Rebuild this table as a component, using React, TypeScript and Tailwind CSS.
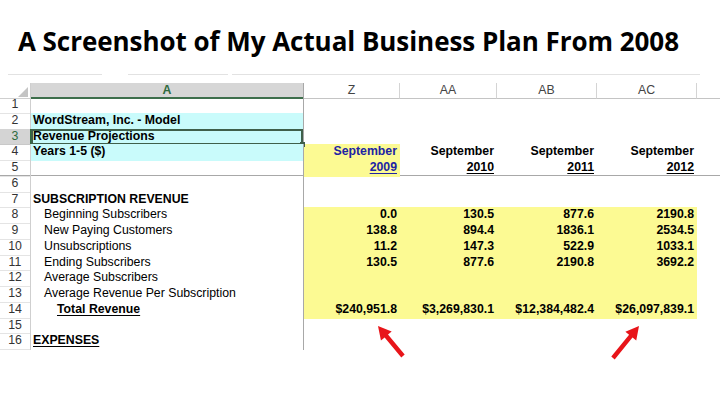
import React from 'react'

type Cell = {
  text?: string
  bold?: boolean
  underline?: boolean
  blue?: boolean
  bg?: string
}

type Row = {
  n: number
  label?: boolean
  a?: string
  aIndent?: 'none' | 'sub' | 'total'
  aBold?: boolean
  aUnderline?: boolean
  cyan?: boolean
  selected?: boolean
  cells?: Cell[]
  yellowAll?: boolean
  bottomLine?: boolean
}

const YELLOW = 'bg-[#fcfa93]'

const ROWS: Row[] = [
  { n: 1 },
  { n: 2, a: 'WordStream, Inc. - Model', aBold: true, cyan: true },
  { n: 3, a: 'Revenue Projections', aBold: true, cyan: true, selected: true },
  {
    n: 4, a: 'Years 1-5 ($)', aBold: true, cyan: true,
    cells: [
      { text: 'September', bold: true, blue: true, bg: YELLOW },
      { text: 'September', bold: true },
      { text: 'September', bold: true },
      { text: 'September', bold: true }
    ]
  },
  {
    n: 5, bottomLine: true,
    cells: [
      { text: '2009', bold: true, blue: true, underline: true, bg: YELLOW },
      { text: '2010', bold: true, underline: true },
      { text: '2011', bold: true, underline: true },
      { text: '2012', bold: true, underline: true }
    ]
  },
  { n: 6 },
  { n: 7, a: 'SUBSCRIPTION REVENUE', aBold: true },
  { n: 8, a: 'Beginning Subscribers', aIndent: 'sub', yellowAll: true, cells: [{ text: '0.0' }, { text: '130.5' }, { text: '877.6' }, { text: '2190.8' }] },
  { n: 9, a: 'New Paying Customers', aIndent: 'sub', yellowAll: true, cells: [{ text: '138.8' }, { text: '894.4' }, { text: '1836.1' }, { text: '2534.5' }] },
  { n: 10, a: 'Unsubscriptions', aIndent: 'sub', yellowAll: true, cells: [{ text: '11.2' }, { text: '147.3' }, { text: '522.9' }, { text: '1033.1' }] },
  { n: 11, a: 'Ending Subscribers', aIndent: 'sub', yellowAll: true, cells: [{ text: '130.5' }, { text: '877.6' }, { text: '2190.8' }, { text: '3692.2' }] },
  { n: 12, a: 'Average Subscribers', aIndent: 'sub', yellowAll: true },
  { n: 13, a: 'Average Revenue Per Subscription', aIndent: 'sub', yellowAll: true },
  {
    n: 14, a: 'Total Revenue', aIndent: 'total', aBold: true, aUnderline: true, yellowAll: true,
    cells: [{ text: '$240,951.8' }, { text: '$3,269,830.1' }, { text: '$12,384,482.4' }, { text: '$26,097,839.1' }]
  },
  { n: 15 },
  { n: 16, a: 'EXPENSES', aBold: true, aUnderline: true }
]

const GRID = 'grid grid-cols-[31px_273px_96px_97px_100px_100px_1fr]'

// polygon for a filled arrow from tail to tip
function arrowPoints(tip: [number, number], tail: [number, number]) {
  const dx = tip[0] - tail[0]
  const dy = tip[1] - tail[1]
  const len = Math.hypot(dx, dy)
  const ux = dx / len
  const uy = dy / len
  const nx = -uy
  const ny = ux
  const head = 13
  const hw = 7
  const sw = 2.2
  const bx = tip[0] - ux * head
  const by = tip[1] - uy * head
  const pts = [
    [tail[0] + nx * sw, tail[1] + ny * sw],
    [bx + nx * sw, by + ny * sw],
    [bx + nx * hw, by + ny * hw],
    [tip[0], tip[1]],
    [bx - nx * hw, by - ny * hw],
    [bx - nx * sw, by - ny * sw],
    [tail[0] - nx * sw, tail[1] - ny * sw]
  ]
  return pts.map(p => p.join(',')).join(' ')
}

function SheetRow({ row }: { row: Row }) {
  const indent = row.aIndent === 'sub' ? 'pl-[13px]' : row.aIndent === 'total' ? 'pl-[26px]' : 'pl-[2px]'
  const cells = row.cells ?? []
  return (
    <div className={`${GRID} h-[15.77px] leading-[15.77px] ${row.bottomLine ? 'border-b border-[#a8a8a8]' : ''}`}>
      <div className={`text-center border-r border-b text-[12.3px] ${row.selected ? 'bg-[#d4d4d4] text-[#2e6b3e] border-r-[#2e6b3e] border-b-[#c8c8c8]' : 'text-[#333] border-r-[#cfcfcf] border-b-[#e4e4e4]'}`}>
        {row.n}
      </div>
      <div className={`relative border-r border-[#a8a8a8] text-[12.3px] text-black whitespace-nowrap ${row.cyan ? 'bg-[#c9fbfb]' : ''} ${indent}`}>
        {row.selected && (
          <div className="absolute inset-0 border-2 border-[#3f5f4a] pointer-events-none">
            <div className="absolute right-[-4px] bottom-[-4px] w-[5px] h-[5px] bg-[#3f5f4a]" />
          </div>
        )}
        <span className={`${row.aBold ? 'font-bold' : ''} ${row.aUnderline ? 'underline underline-offset-2' : ''}`}>{row.a}</span>
      </div>
      {[0, 1, 2, 3].map(i => {
        const c = cells[i]
        const bg = c?.bg ?? (row.yellowAll ? YELLOW : '')
        return (
          <div key={i} className={`text-right pr-[3px] text-[12.3px] whitespace-nowrap ${bg}`}>
            {c?.text && (
              <span className={`font-bold ${c.blue ? 'text-[#2023a4]' : 'text-black'} ${c.underline ? 'underline underline-offset-2' : ''}`}>
                {c.text}
              </span>
            )}
          </div>
        )
      })}
      <div />
    </div>
  )
}

export default function App() {
  return (
    <div className="relative w-[720px] h-[405px] overflow-hidden bg-white font-['Liberation_Sans',Arial,sans-serif]">
      <div className="pl-[18px] pt-[22px] h-[74px]">
        <h1 className="font-['Open_Sans',sans-serif] font-bold text-[26px] leading-[38px] text-black tracking-[-0.05px] whitespace-nowrap">
          A Screenshot of My Actual Business Plan From 2008
        </h1>
      </div>

      <div className="flex h-[9px]">
        <div className="ml-[8px] w-[94px] h-px bg-[#e2e2e2]" />
        <div className="ml-[26px] w-[100px] h-px bg-[#e2e2e2]" />
        <div className="ml-[4px] w-[468px] h-px bg-[#e2e2e2]" />
      </div>

      {/* sheet */}
      <div className="h-[267px] overflow-hidden">
        <div className={`${GRID} h-[14px] leading-[14px] text-[12.3px]`}>
          <div className="relative border-r border-b border-[#cfcfcf]">
            <svg width="10" height="10" className="absolute right-[2px] bottom-[1px]">
              <polygon points="10,0 10,10 0,10" fill="#c4c4c4" />
            </svg>
          </div>
          <div className="bg-[#d6d6d6] border-b-2 border-[#3d6e4b] text-center font-bold text-[#2f6b3e] border-r border-r-[#a8a8a8]">A</div>
          {['Z', 'AA', 'AB', 'AC'].map(h => (
            <div key={h} className="text-center text-[#444] border-r border-b border-[#d4d4d4] border-b-[#c4c4c4]">{h}</div>
          ))}
          <div className="border-b border-[#c4c4c4]" />
        </div>
        {ROWS.map(r => (
          <SheetRow key={r.n} row={r} />
        ))}
        <div className={`${GRID} h-[15.77px]`}>
          <div className="border-r border-[#cfcfcf]" />
          <div className="border-r border-[#a8a8a8]" />
        </div>
      </div>

      <svg width="720" height="405" className="absolute left-0 top-0 pointer-events-none">
        <polygon points={arrowPoints([378, 326], [403, 356])} fill="#e8151a" />
        <polygon points={arrowPoints([639, 326], [613, 358])} fill="#e8151a" />
      </svg>
    </div>
  )
}
